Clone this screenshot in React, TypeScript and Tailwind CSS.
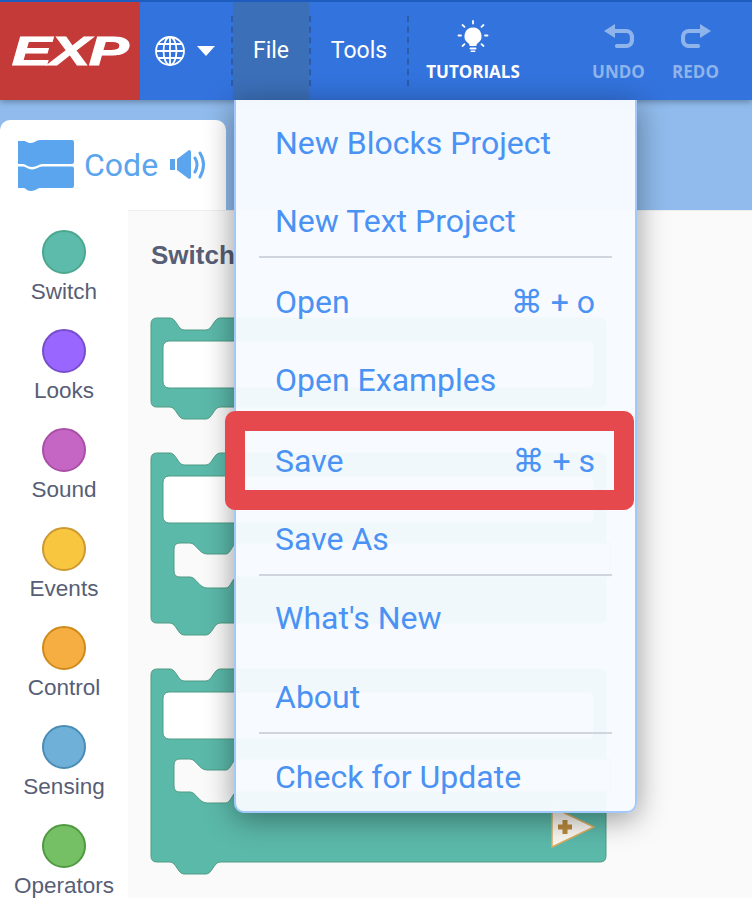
import React from "react";

const sans = "font-['Roboto',sans-serif]";
const helv = "font-['Liberation_Sans',Arial,sans-serif]";

const categories = [
  { name: "Switch", fill: "bg-[#5cbbaa]", ring: "border-[#4ba88f]" },
  { name: "Looks", fill: "bg-[#9966ff]", ring: "border-[#774dcb]" },
  { name: "Sound", fill: "bg-[#c566c4]", ring: "border-[#a94fa8]" },
  { name: "Events", fill: "bg-[#f8c63f]", ring: "border-[#cc9933]" },
  { name: "Control", fill: "bg-[#f6ad42]", ring: "border-[#cf8b17]" },
  { name: "Sensing", fill: "bg-[#6fb0d8]", ring: "border-[#4a8cb5]" },
  { name: "Operators", fill: "bg-[#75c064]", ring: "border-[#4f9a40]" },
];

// flyout svg starts at x=128, y=210 of the page, so subtract that from everything
const X = 128, Y = 210;

function blockPath(top: number, bottom: number) {
  const t = top - Y, b = bottom - Y;
  const l = 151 - X, r = 606 - X;
  return `M${l} ${t + 6} Q${l} ${t} ${l + 6} ${t} H${l + 19} C${l + 25} ${t} ${l + 27} ${t + 12} ${l + 33} ${t + 12} H${l + 55} C${l + 61} ${t + 12} ${l + 63} ${t} ${l + 69} ${t} H${r - 6} Q${r} ${t} ${r} ${t + 6} V${b - 6} Q${r} ${b} ${r - 6} ${b} H${l + 69} C${l + 63} ${b} ${l + 61} ${b + 12} ${l + 55} ${b + 12} H${l + 33} C${l + 27} ${b + 12} ${l + 25} ${b} ${l + 19} ${b} H${l + 6} Q${l} ${b} ${l} ${b - 6} Z`;
}

// the C-block mouth, open on the right side
function slotPath(top: number, bottom: number) {
  const t = top - Y, b = bottom - Y;
  const l = 174 - X, r = 610 - X;
  return `M${l} ${t + 6} Q${l} ${t} ${l + 6} ${t} H${l + 16} C${l + 22} ${t} ${l + 25} ${t + 11} ${l + 33} ${t + 11} H${l + 52} C${l + 57} ${t + 11} ${l + 58} ${t} ${l + 64} ${t} H${r} V${b} H${l + 64} C${l + 58} ${b} ${l + 57} ${b + 11} ${l + 52} ${b + 11} H${l + 33} C${l + 25} ${b + 11} ${l + 22} ${b} ${l + 16} ${b} H${l + 6} Q${l} ${b} ${l} ${b - 6} Z`;
}

function Field({ y }: { y: number }) {
  return <rect x={163 - X} y={y - Y} width={431} height={47} rx={6} fill="#fff" stroke="#4f9b82" strokeWidth={1} />;
}

function Blocks() {
  const teal = "#5bb9aa", edge = "#4f9b82";
  return (
    <svg width={624} height={688} viewBox="0 0 624 688" className="block">
      <path d={blockPath(317, 406)} fill={teal} stroke={edge} />
      <Field y={340} />

      <path d={blockPath(452, 622)} fill={teal} stroke={edge} />
      <Field y={475} />
      <path d={slotPath(542, 576)} fill="#fafafa" stroke={edge} />

      <path d={blockPath(668, 861)} fill={teal} stroke={edge} />
      <Field y={691} />
      <path d={slotPath(758, 791)} fill="#fafafa" stroke={edge} />

      <path d={`M${552 - X} ${806 - Y} L${594 - X} ${826 - Y} L${552 - X} ${846 - Y} Z`} fill="#fbf8f2" stroke="#dcae62" strokeWidth={1.5} />
      <path d={`M${565 - X} ${819 - Y} V${833 - Y} M${558 - X} ${826 - Y} H${572 - X}`} stroke="#b98a3c" strokeWidth={5} />
    </svg>
  );
}

function Logo() {
  return (
    <div className="w-[140px] h-full bg-[#c43a38] flex items-center justify-center">
      <span className={`${helv} text-white font-bold italic text-[40px] leading-none scale-x-[1.5] tracking-[-1px] [-webkit-text-stroke:1px_white]`}>EXP</span>
    </div>
  );
}

function GlobeIcon() {
  return (
    <svg width={32} height={32} viewBox="0 0 32 32" fill="none" stroke="#fff" strokeWidth={1.8}>
      <circle cx={16} cy={16} r={14} />
      <ellipse cx={16} cy={16} rx={6.5} ry={14} />
      <path d="M16 2v28M2 16h28M4 9h24M4 23h24" />
    </svg>
  );
}

function BulbIcon() {
  return (
    <svg width={32} height={34} viewBox="0 0 32 34" fill="#fff">
      <path d="M16 7.5a8.5 8.5 0 0 0-5 15.4c1 .8 1.5 1.7 1.6 3h6.8c.1-1.3.6-2.2 1.6-3A8.5 8.5 0 0 0 16 7.5Z" />
      <rect x={12.5} y={27.5} width={7} height={2} rx={1} />
      <rect x={13.5} y={30.5} width={5} height={1.6} rx={.8} />
      <g stroke="#fff" strokeWidth={1.8} strokeLinecap="round">
        <path d="M16 1v2.5M5.5 5l2 1.8M26.5 5l-2 1.8M1.5 15.5h2.5M28 15.5h2.5M5.5 26l2-1.8M26.5 26l-2-1.8" />
      </g>
    </svg>
  );
}

function UndoIcon({ flip }: { flip?: boolean }) {
  return (
    <svg width={30} height={24} viewBox="0 0 30 24" fill="none" className={flip ? "-scale-x-100" : ""}>
      <path d="M0 7 11 0v14Z" fill="#8fb4ec" />
      <path d="M10 7h12a6 6 0 0 1 6 6v3a6 6 0 0 1-6 6H13" stroke="#8fb4ec" strokeWidth={4.2} strokeLinecap="round" />
    </svg>
  );
}

function Sep() {
  return <div className="h-[70px] border-l-2 border-dashed border-[#2a5ca8]" />;
}

function Header() {
  return (
    <div className="relative z-10 h-[100px] flex items-center bg-[#3373dd] border-t-2 border-[#1f5cc0] shadow-[0_2px_6px_rgba(0,0,0,.3)] text-white">
      <Logo />
      <div className="w-[91px] flex items-center pl-[14px] gap-[11px]">
        <GlobeIcon />
        <svg width={18} height={10} viewBox="0 0 18 10"><path d="M0 0h18L9 10Z" fill="#fff" /></svg>
      </div>
      <div className="h-full flex items-center">
        <Sep />
        <div className={`${sans} w-[76px] h-full bg-[#3b6fb8] flex items-center justify-center text-[23px]`}>File</div>
        <Sep />
      </div>
      <div className={`${sans} w-[96px] flex justify-center text-[23px]`}>Tools</div>
      <Sep />
      <div className="w-[128px] self-start pt-[18px] flex flex-col items-center">
        <BulbIcon />
        <span className="font-['Open_Sans',sans-serif] font-bold text-[17px] leading-[20px] mt-[8px]">TUTORIALS</span>
      </div>
      <div className="self-start pt-[22px] flex gap-[29px] pl-[56px] font-['Open_Sans',sans-serif] font-bold text-[17px] text-[#8fb4ec]">
        <div className="flex flex-col items-center w-[51px]">
          <UndoIcon />
          <span className="leading-[20px] mt-[14px]">UNDO</span>
        </div>
        <div className="flex flex-col items-center w-[45px]">
          <UndoIcon flip />
          <span className="leading-[20px] mt-[14px]">REDO</span>
        </div>
      </div>
    </div>
  );
}

function CodeTab() {
  const c = "#5ba5ee";
  return (
    <div className="h-[110px] bg-[#90bbec] flex items-end">
      <div className="w-[226px] h-[90px] bg-white rounded-t-[10px] flex items-center pl-[18px]">
        <svg width={56} height={51} viewBox="0 0 56 51" fill={c}>
          <path d="M0 1h6c2 0 3 2 7 2s5-3 9-3h32a2 2 0 0 1 2 2v20a2 2 0 0 1-2 2H24c-3 0-5 3-10 3s-6-3-9-3H0Z" />
          <path d="M0 26.500h5c3 0 5 3 9 3s7-3 10-3h30a2 2 0 0 1 2 2V46a2 2 0 0 1-2 2H22c-3 0-4 3-9 3s-5-3-7-3H0Z" />
        </svg>
        <span className={`${sans} text-[32px] ml-[10px] text-[#5ba5ee]`}>Code</span>
        <svg width={38} height={32} viewBox="0 0 38 32" fill="none" className="ml-[12px]">
          <path d="M0 10h5v11H0ZM7 10l12-9q2 0 2 2v25q0 2-2 2L7 21Z" fill={c} />
          <path d="M25 9q4 6.5 0 14M30 4q7 11.5 0 24" stroke={c} strokeWidth={3} strokeLinecap="round" />
        </svg>
      </div>
    </div>
  );
}

function Sidebar() {
  return (
    <div className="w-[128px] bg-white flex flex-col items-center pt-[20px]">
      {categories.map((c) => (
        <div key={c.name} className="h-[99px] flex flex-col items-center shrink-0">
          <div className={`w-[44px] h-[44px] rounded-full border-2 ${c.fill} ${c.ring}`} />
          <span className={`${helv} text-[22.5px] leading-[26px] mt-[5px] text-[#575e75]`}>{c.name}</span>
        </div>
      ))}
    </div>
  );
}

function MenuRow({ label, keys, className = "" }: { label: string; keys?: string; className?: string }) {
  return (
    <div className={`h-[78px] shrink-0 flex items-center justify-between pl-[39px] pr-[40px] ${className}`}>
      <span>{label}</span>
      {keys && <span className="font-['Roboto','DejaVu_Sans',sans-serif]">{keys}</span>}
    </div>
  );
}

function Divider({ className }: { className: string }) {
  return <div className={`h-[2px] mx-[23px] shrink-0 bg-[#cfd6dd] ${className}`} />;
}

function FileMenu() {
  return (
    <div className={`${sans} absolute z-20 left-[234px] top-[100px] w-[403px] h-[713px] pt-[4px] flex flex-col overflow-hidden text-[32px] text-[#4a92f3] bg-[#f7fbff]/96 border-x-2 border-b-2 border-[#a3c9fb] rounded-b-[10px] shadow-[0_6px_30px_rgba(0,0,0,.4)]`}>
      <MenuRow label="New Blocks Project" />
      <MenuRow label="New Text Project" />
      <Divider className="-mt-[4px] mb-[5px]" />
      <MenuRow label="Open" keys="⌘ + o" />
      <MenuRow label="Open Examples" />
      <MenuRow label="Save" keys="⌘ + s" className="mt-[3px]" />
      <MenuRow label="Save As" />
      <Divider className="-mt-[4px] mb-[3px]" />
      <MenuRow label="What's New" />
      <MenuRow label="About" className="mt-[1px]" />
      <Divider className="-mt-[4px] mb-[4px]" />
      <MenuRow label="Check for Update" />
    </div>
  );
}

export default function App() {
  return (
    <div className="relative w-full h-[898px] overflow-hidden bg-[#fafafa]">
      <Header />
      <CodeTab />
      <div className="flex h-[688px]">
        <Sidebar />
        <div className="relative flex-1 bg-[#fafafa] border-t border-[#eeeeee]">
          <div className={`${helv} absolute left-[23px] top-[29px] text-[26px] leading-[30px] font-bold text-[#575e75]`}>Switch</div>
          <Blocks />
        </div>
      </div>
      <FileMenu />
      {/* the red box the tutorial put round Save */}
      <div className="absolute z-30 left-[225px] top-[411px] w-[409px] h-[99px] border-[20px] border-[#e5484d] rounded-[10px]" />
    </div>
  );
}
